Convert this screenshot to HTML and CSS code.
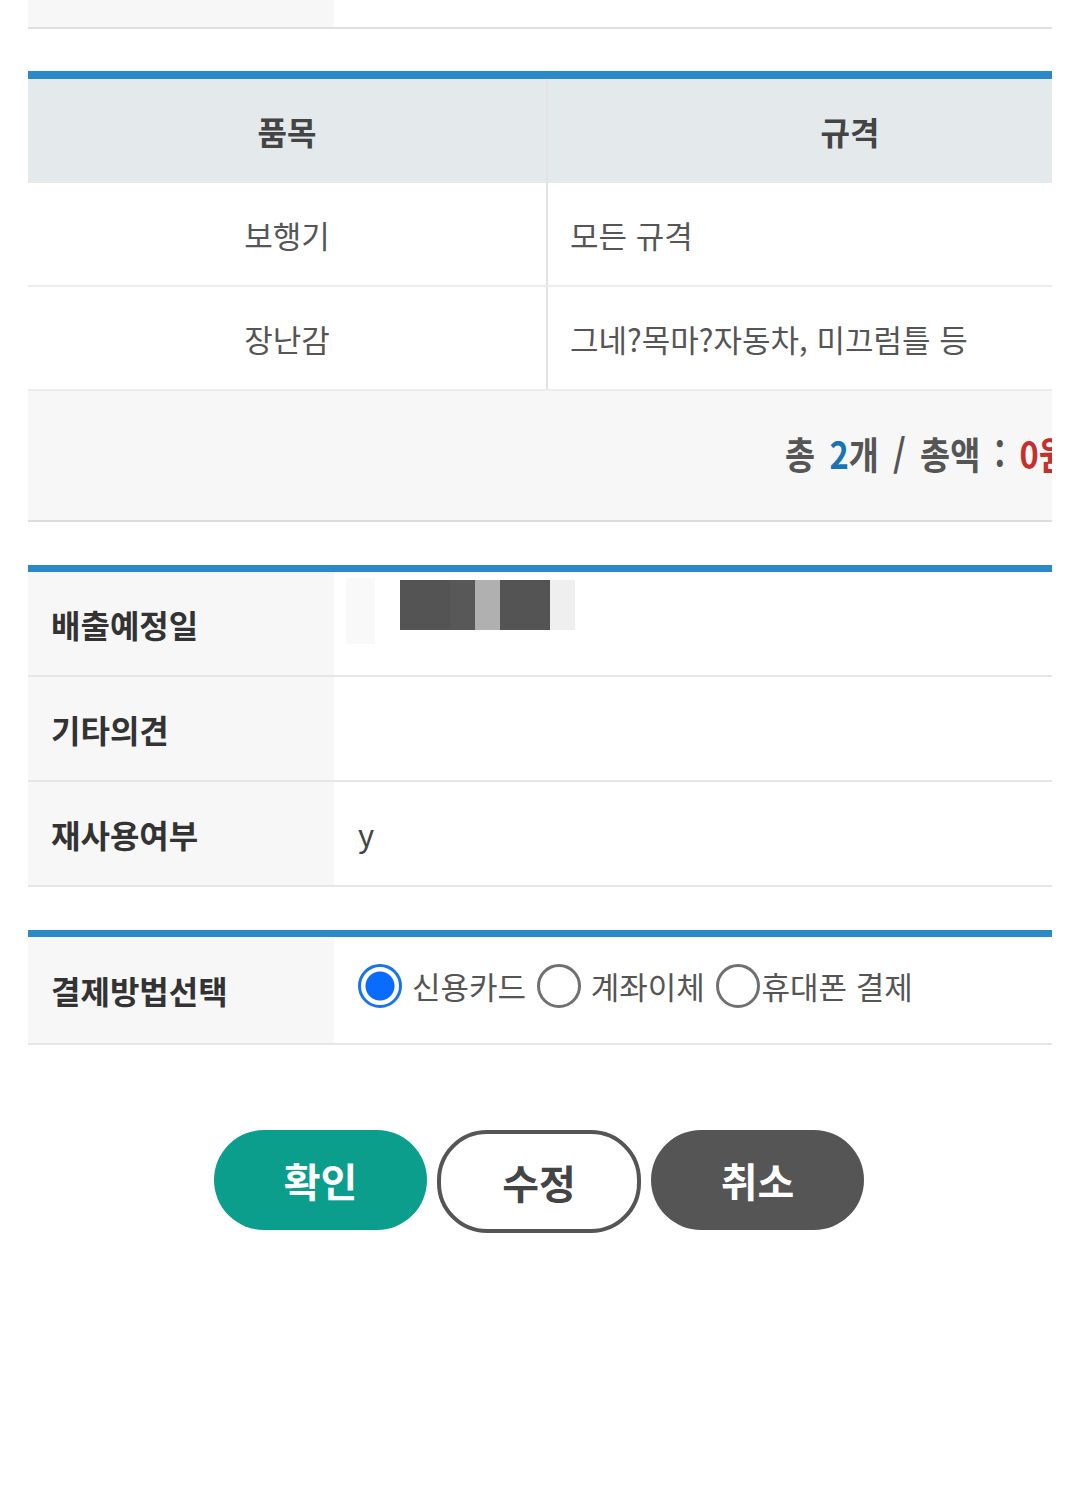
FILE: index.html
```html
<!DOCTYPE html>
<html lang="ko">
<head>
    <meta charset="UTF-8">
    <meta name="viewport" content="width=device-width, initial-scale=1.0">
    <title>배출 신청 확인</title>
    <link rel="stylesheet" href="styles.css">
</head>
<body>
<div class="wrap">

    <!-- 위쪽 표의 마지막 줄 -->
    <div class="prev-row">
        <div class="prev-label"></div>
        <div class="prev-value"></div>
    </div>

    <table class="item-table">
        <thead>
            <tr>
                <th class="col-name">품목</th>
                <th>규격</th>
            </tr>
        </thead>
        <tbody>
            <tr>
                <td class="col-name">보행기</td>
                <td class="spec">모든 규격</td>
            </tr>
            <tr>
                <td class="col-name">장난감</td>
                <td class="spec">그네?목마?자동차, 미끄럼틀 등</td>
            </tr>
            <tr class="total-row">
                <td colspan="2"><div class="total"><span class="total-text">총 <span class="count">2</span>개 / 총액 : <span class="price">0원</span></span></div></td>
            </tr>
        </tbody>
    </table>

    <table class="info-table">
        <tr>
            <th>배출예정일</th>
            <td>
                <div class="date-blur">
                    <span class="blk b1"></span>
                    <span class="blk b2"></span>
                    <span class="blk b3"></span>
                    <span class="blk b4"></span>
                    <span class="blk b5"></span>
                    <span class="blk b6"></span>
                </div>
            </td>
        </tr>
        <tr>
            <th>기타의견</th>
            <td></td>
        </tr>
        <tr>
            <th>재사용여부</th>
            <td>y</td>
        </tr>
    </table>

    <table class="info-table pay-table">
        <tr>
            <th>결제방법선택</th>
            <td>
                <label class="radio"><input type="radio" name="pay" checked>신용카드</label>
                <label class="radio"><input type="radio" name="pay">계좌이체</label>
                <label class="radio tight"><input type="radio" name="pay">휴대폰 결제</label>
            </td>
        </tr>
    </table>

    <div class="btns">
        <button type="button" class="btn btn-ok">확인</button>
        <button type="button" class="btn btn-edit">수정</button>
        <button type="button" class="btn btn-cancel">취소</button>
    </div>

</div>
</body>
</html>
```

FILE: styles.css
```css
body {
    margin: 0;
    background: #fff;
    font-family: "Noto Sans CJK KR", "Noto Sans", sans-serif;
    color: #555;
}
.wrap {
    margin: 0 28px;
    overflow: hidden;
    height: 1492px;
}

.prev-row {
    display: flex;
    height: 27px;
    border-bottom: 2px solid #e0e0e0;
}
.prev-label {
    width: 306px;
    background: #f7f7f7;
}

table {
    width: 100%;
    border-collapse: collapse;
    table-layout: fixed;
}

/* 품목 표 (화면 오른쪽으로 넘침) */
.item-table {
    width: 1124px;
    margin-top: 42px;
    border-top: 8px solid #2a8ac8;
}
.item-table th {
    height: 104px;
    background: #e4e9eb;
    font-size: 32px;
    font-weight: 700;
    color: #444;
    padding: 0;
}
.item-table .col-name {
    width: 518px;
    border-right: 2px solid #e3e3e3;
}
.item-table td {
    height: 102px;
    padding: 0;
    font-size: 31px;
    color: #555;
    text-align: center;
    border-bottom: 2px solid #ececec;
}
.item-table td.spec {
    text-align: left;
    padding-left: 22px;
}
.total-row td {
    height: 129px;
    background: #f7f7f7;
    border-bottom: 2px solid #dcdcdc;
}
.total {
    padding-left: 757px;
    white-space: nowrap;
    text-align: left;
}
.total-text {
    display: inline-block;
    font-size: 38px;
    font-weight: 700;
    color: #555;
    transform: scaleX(0.86);
    transform-origin: left center;
    word-spacing: 6px;
    margin-top: -6px;
}
.count {
    color: #1a74b4;
}
.price {
    color: #c4302b;
}

/* 정보 표 */
.info-table {
    margin-top: 43px;
    border-top: 7px solid #2a8ac8;
}
.info-table th {
    width: 283px;
    height: 103px;
    padding: 0 0 0 23px;
    background: #f7f7f7;
    text-align: left;
    font-size: 32px;
    font-weight: 700;
    color: #333;
    border-bottom: 2px solid #e6e6e6;
}
.info-table td {
    padding: 0 0 0 24px;
    font-size: 31px;
    color: #444;
    border-bottom: 2px solid #e6e6e6;
}

.date-blur {
    display: flex;
    align-items: flex-start;
    height: 66px;
    margin-left: -12px;
    margin-top: -26px;
}
.blk {
    display: block;
    height: 50px;
    margin-top: 2px;
}
.b1 { width: 29px; height: 66px; background: #f9f9f9; margin: 0 25px 0 0; }
.b2 { width: 50px; background: #545454; }
.b3 { width: 25px; background: #585858; }
.b4 { width: 25px; background: #b0b0b0; }
.b5 { width: 50px; background: #545454; }
.b6 { width: 25px; background: #efefef; }

.pay-table th {
    height: 106px;
}
.pay-table td {
    white-space: nowrap;
}
.radio {
    display: inline-flex;
    align-items: center;
    font-size: 31px;
    color: #555;
    margin-right: 2px;
}
.radio.tight {
    margin-right: 0;
}
.radio input {
    appearance: none;
    -webkit-appearance: none;
    width: 44px;
    height: 44px;
    margin: 0 10px 0 0;
    border: 3px solid #707070;
    border-radius: 50%;
    background: #fff;
    box-sizing: border-box;
}
.radio.tight input {
    margin-right: 2px;
}
.radio input:checked {
    border: 3px solid #1a73e8;
    background: radial-gradient(circle, #0a6cff 0 14px, #fff 15px);
}

/* 버튼 */
.btns {
    display: flex;
    justify-content: center;
    gap: 10px;
    margin-top: 85px;
    padding-right: 2px;
}
.btn {
    width: 213px;
    height: 100px;
    border-radius: 50px;
    border: none;
    font-family: inherit;
    font-size: 40px;
    font-weight: 700;
    color: #fff;
    cursor: pointer;
}
.btn-ok {
    background: #0b9e8c;
}
.btn-edit {
    width: 204px;
    height: 103px;
    background: #fff;
    border: 4px solid #555;
    color: #444;
}
.btn-cancel {
    background: #555;
}
```
